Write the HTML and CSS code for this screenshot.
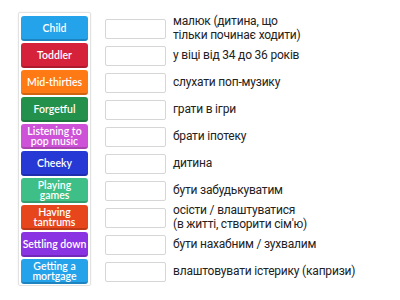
FILE: index.html
```html
<!DOCTYPE html>
<html lang="uk">
<head>
  <meta charset="utf-8" />
  <meta name="viewport" content="width=device-width, initial-scale=1" />
  <title>Match up</title>
  <link rel="stylesheet" href="styles.css">
</head>
<body>
  <div class="board">
    <div class="tiles">
      <div class="tile blue">Child</div>
      <div class="tile red">Toddler</div>
      <div class="tile orange">Mid-thirties</div>
      <div class="tile green">Forgetful</div>
      <div class="tile pink">Listening to<br>pop music</div>
      <div class="tile navy">Cheeky</div>
      <div class="tile mint">Playing<br>games</div>
      <div class="tile scarlet">Having<br>tantrums</div>
      <div class="tile purple">Settling down</div>
      <div class="tile blue">Getting a<br>mortgage</div>
    </div>

    <div class="answers">
      <div class="row"><span class="slot"></span><span class="def">малюк (дитина, що<br>тільки починає ходити)</span></div>
      <div class="row"><span class="slot"></span><span class="def">у віці від 34 до 36 років</span></div>
      <div class="row"><span class="slot"></span><span class="def">слухати поп-музику</span></div>
      <div class="row"><span class="slot"></span><span class="def">грати в ігри</span></div>
      <div class="row"><span class="slot"></span><span class="def">брати іпотеку</span></div>
      <div class="row"><span class="slot"></span><span class="def">дитина</span></div>
      <div class="row"><span class="slot"></span><span class="def">бути забудькуватим</span></div>
      <div class="row"><span class="slot"></span><span class="def">осісти / влаштуватися<br>(в житті, створити сім'ю)</span></div>
      <div class="row"><span class="slot"></span><span class="def">бути нахабним / зухвалим</span></div>
      <div class="row"><span class="slot"></span><span class="def">влаштовувати істерику (капризи)</span></div>
    </div>
  </div>
</body>
</html>
```

FILE: styles.css
```css
body {
  margin: 0;
  padding: 0;
  background: #fff;
  font-family: "Roboto", "Noto Sans", sans-serif;
}

.board {
  display: flex;
  align-items: flex-start;
  padding: 12px 0 0 18px;
}

.tiles {
  display: flex;
  flex-direction: column;
  gap: 2px;
  padding: 3px 2px 1px 2px;
  border: 1px solid #e2e2e2;
  border-radius: 2px;
  box-shadow: 0 0 2px rgba(0, 0, 0, 0.08);
}

.tile {
  width: 67px;
  height: 25px;
  box-sizing: border-box;
  border-radius: 3px;
  border-bottom: 2px solid rgba(0, 0, 0, 0.18);
  color: #fff;
  font-family: "Lato", sans-serif;
  font-weight: 600;
  font-size: 10.5px;
  line-height: 10.5px;
  text-align: center;
  white-space: nowrap;
  display: flex;
  align-items: center;
  justify-content: center;
  padding: 1px 0 0;
}

.blue { background: #24a2ea; }
.red { background: #d5213a; }
.orange { background: #ff7a14; }
.green { background: #23904b; }
.pink { background: #cd52d7; }
.navy { background: #2639d4; }
.mint { background: #3ebf87; }
.scarlet { background: #e7461c; }
.purple { background: #8a33e2; }

.answers {
  display: flex;
  flex-direction: column;
  gap: 2px;
  padding-top: 4px;
  margin-left: 14px;
}

.row {
  height: 25px;
  display: flex;
  align-items: center;
  gap: 7px;
}

.slot {
  width: 61px;
  height: 20px;
  box-sizing: border-box;
  border: 1px solid #d6d6d6;
  border-radius: 2px;
  background: #fff;
  flex: none;
}

.def {
  font-size: 12px;
  letter-spacing: -0.2px;
  line-height: 13.5px;
  color: #222;
  white-space: nowrap;
}
```
